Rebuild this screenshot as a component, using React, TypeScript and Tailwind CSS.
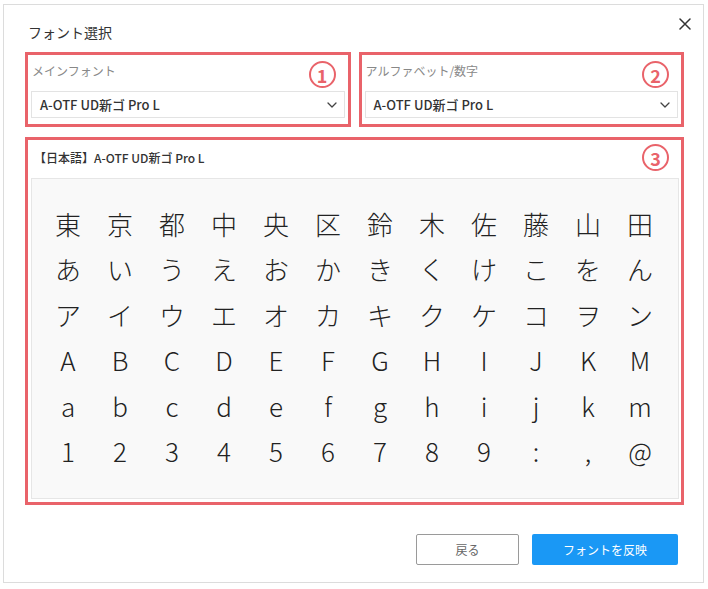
import React from "react";

const FONT = { fontFamily: '"Noto Sans CJK JP", "Noto Sans", sans-serif' };

const rows = [
  ["東", "京", "都", "中", "央", "区", "鈴", "木", "佐", "藤", "山", "田"],
  ["あ", "い", "う", "え", "お", "か", "き", "く", "け", "こ", "を", "ん"],
  ["ア", "イ", "ウ", "エ", "オ", "カ", "キ", "ク", "ケ", "コ", "ヲ", "ン"],
  ["A", "B", "C", "D", "E", "F", "G", "H", "I", "J", "K", "M"],
  ["a", "b", "c", "d", "e", "f", "g", "h", "i", "j", "k", "m"],
  ["1", "2", "3", "4", "5", "6", "7", "8", "9", ":", ",", "@"],
];

function Badge({ n }: { n: string }) {
  return (
    <div className="flex h-[27px] w-[27px] items-center justify-center rounded-full border-2 border-[#e9636a] text-[18px] font-bold leading-none text-[#e9636a]">
      {n}
    </div>
  );
}

function Chevron() {
  return (
    <svg width="10" height="6" viewBox="0 0 10 6" fill="none">
      <path d="M1 1l4 4 4-4" stroke="#444" strokeWidth="1.3" strokeLinecap="round" strokeLinejoin="round" />
    </svg>
  );
}

function FontSelect({ label, badge }: { label: string; badge: string }) {
  return (
    <div className="relative flex h-[75px] flex-1 flex-col border-[3px] border-[#e9636a] px-[3px]">
      <div className="pl-[1px] pt-[8px] text-[12px] leading-[16px] text-[#888]">{label}</div>
      <div className="mt-[12px] flex h-[27px] items-center justify-between border border-[#e3e3e3] bg-white pl-[8px] pr-[7px]">
        <span className="text-[13px] font-medium text-[#333]">A-OTF UD新ゴ Pro L</span>
        <Chevron />
      </div>
      <div className="absolute right-[12px] top-[6px]">
        <Badge n={badge} />
      </div>
    </div>
  );
}

export default function App() {
  return (
    <div className="h-[589px] w-[708px] bg-white pl-[3px] pt-[4px]" style={FONT}>
      <div className="relative flex h-[579px] w-[701px] flex-col border border-[#dcdcdc] bg-white pl-[21px] pr-[19px]">
        <button className="absolute right-[12px] top-[13px] flex h-[12px] w-[12px] items-center justify-center">
          <svg width="12" height="12" viewBox="0 0 12 12">
            <path d="M1 1l10 10M11 1L1 11" stroke="#333" strokeWidth="1.5" strokeLinecap="round" />
          </svg>
        </button>

        <div className="pl-[3px] pt-[17px] text-[14px] leading-[20px] text-[#333]">フォント選択</div>

        <div className="mt-[10px] flex gap-[8px]">
          <FontSelect label="メインフォント" badge="1" />
          <FontSelect label="アルファベット/数字" badge="2" />
        </div>

        <div className="relative mt-[10px] flex h-[368px] flex-col border-[3px] border-[#e9636a] pb-[3px] pl-[3px] pr-[2px]">
          <div className="pl-[3px] pt-[10px] text-[12px] font-medium leading-[16px] text-[#333]">
            【日本語】A-OTF UD新ゴ Pro L
          </div>
          <div className="mt-[12px] flex-1 border border-[#e6e6e6] bg-[#f9f9f9] pl-[10px] pt-[22px]">
            {rows.map((r, i) => (
              <div key={i} className="grid h-[45.5px] grid-cols-[repeat(12,52px)] items-center">
                {r.map((c, j) => (
                  <div key={j} className="text-center text-[26px] font-light leading-none text-[#222]">
                    {c}
                  </div>
                ))}
              </div>
            ))}
          </div>
          <div className="absolute right-[12px] top-[4px]">
            <Badge n="3" />
          </div>
        </div>

        <div className="mt-[29px] flex justify-end gap-[13px] pr-[6px]">
          <button className="h-[31px] w-[103px] rounded-[2px] border border-[#9a9a9a] bg-white text-[12px] text-[#666]">
            戻る
          </button>
          <button className="h-[31px] w-[146px] rounded-[2px] bg-[#1a98f5] text-[12px] text-white">
            フォントを反映
          </button>
        </div>
      </div>
    </div>
  );
}
